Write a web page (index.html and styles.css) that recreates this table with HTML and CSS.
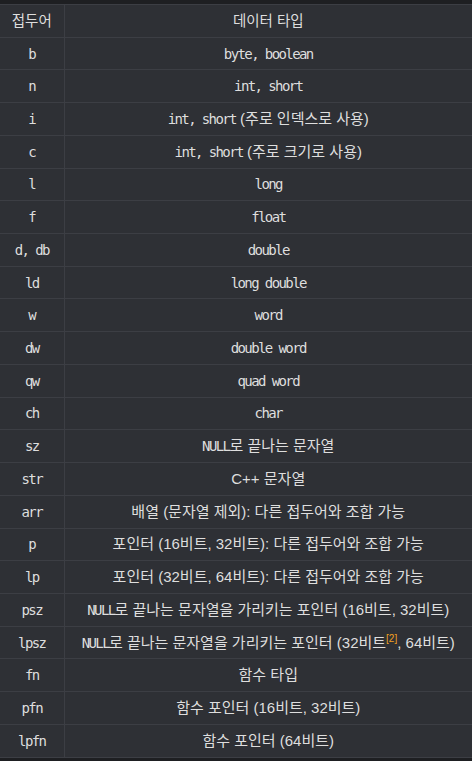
FILE: index.html
```html
<!DOCTYPE html>
<html>
<head>
	<meta charset="utf-8">
	<title>헝가리안 표기법 접두어</title>
<link rel="stylesheet" href="styles.css">
</head>
<body>
	<table class="prefix-table">
		<tr>
			<th class="col-prefix">접두어</th>
			<th>데이터 타입</th>
		</tr>
		<tr><td><span class="code">b</span></td><td><span class="code">byte, boolean</span></td></tr>
		<tr><td><span class="code">n</span></td><td><span class="code">int, short</span></td></tr>
		<tr><td><span class="code">i</span></td><td><span class="code">int, short</span> (주로 인덱스로 사용)</td></tr>
		<tr><td><span class="code">c</span></td><td><span class="code">int, short</span> (주로 크기로 사용)</td></tr>
		<tr><td><span class="code">l</span></td><td><span class="code">long</span></td></tr>
		<tr><td><span class="code">f</span></td><td><span class="code">float</span></td></tr>
		<tr><td><span class="code">d, db</span></td><td><span class="code">double</span></td></tr>
		<tr><td><span class="code">ld</span></td><td><span class="code">long double</span></td></tr>
		<tr><td><span class="code">w</span></td><td><span class="code">word</span></td></tr>
		<tr><td><span class="code">dw</span></td><td><span class="code">double word</span></td></tr>
		<tr><td><span class="code">qw</span></td><td><span class="code">quad word</span></td></tr>
		<tr><td><span class="code">ch</span></td><td><span class="code">char</span></td></tr>
		<tr><td><span class="code">sz</span></td><td><span class="code">NULL</span>로 끝나는 문자열</td></tr>
		<tr><td><span class="code">str</span></td><td>C++ 문자열</td></tr>
		<tr><td><span class="code">arr</span></td><td>배열 (문자열 제외): 다른 접두어와 조합 가능</td></tr>
		<tr><td><span class="code">p</span></td><td>포인터 (16비트, 32비트): 다른 접두어와 조합 가능</td></tr>
		<tr><td><span class="code">lp</span></td><td>포인터 (32비트, 64비트): 다른 접두어와 조합 가능</td></tr>
		<tr><td><span class="code">psz</span></td><td><span class="code">NULL</span>로 끝나는 문자열을 가리키는 포인터 (16비트, 32비트)</td></tr>
		<tr><td><span class="code">lpsz</span></td><td><span class="code">NULL</span>로 끝나는 문자열을 가리키는 포인터 (32비트<sup class="fn">[2]</sup>, 64비트)</td></tr>
		<tr><td><span class="code">fn</span></td><td>함수 타입</td></tr>
		<tr><td><span class="code">pfn</span></td><td>함수 포인터 (16비트, 32비트)</td></tr>
		<tr><td><span class="code">lpfn</span></td><td>함수 포인터 (64비트)</td></tr>
	</table>
</body>
</html>
```

FILE: styles.css
```css
* {
	margin: 0;
	padding: 0;
	box-sizing: border-box;
}

body {
	background-color: #1e1f22;
	padding-top: 4px;
	font-family: "Liberation Sans", "Noto Sans CJK KR", sans-serif;
	font-size: 15px;
	color: #dedede;
}

.prefix-table {
	width: 100%;
	border-collapse: collapse;
	background-color: #2e3035;
}

.prefix-table th,
.prefix-table td {
	border: 1px solid #3c3e44;
	text-align: center;
	line-height: 16px;
	padding: 7.87px 2px;
	font-weight: normal;
	white-space: nowrap;
}

.prefix-table th {
	font-size: 14.5px;
}

.prefix-table tr > :first-child {
	border-left: none;
	width: 64px;
}

.prefix-table tr > :last-child {
	border-right: none;
}

.code {
	font-family: "DejaVu Sans Mono", monospace;
	font-size: 14px;
	letter-spacing: -1.6px;
	line-height: 1;
}

.fn {
	line-height: 0;
	font-size: 10px;
	color: #f0a020;
}
```
